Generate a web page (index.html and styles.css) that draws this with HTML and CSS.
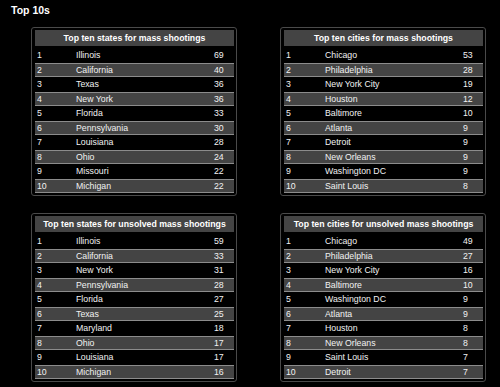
FILE: index.html
```html
<!DOCTYPE html>
<html>
<head>
<meta charset="utf-8">
<link rel="stylesheet" href="styles.css">
</head>
<body>
<div class="page">
  <h1 class="title">Top 10s</h1>
  <div class="grid">
    <div class="panel">
      <div class="head">Top ten states for mass shootings</div>
      <div class="row"><span>1</span><span>Illinois</span><span>69</span></div>
      <div class="row alt"><span>2</span><span>California</span><span>40</span></div>
      <div class="row"><span>3</span><span>Texas</span><span>36</span></div>
      <div class="row alt"><span>4</span><span>New York</span><span>36</span></div>
      <div class="row"><span>5</span><span>Florida</span><span>33</span></div>
      <div class="row alt"><span>6</span><span>Pennsylvania</span><span>30</span></div>
      <div class="row"><span>7</span><span>Louisiana</span><span>28</span></div>
      <div class="row alt"><span>8</span><span>Ohio</span><span>24</span></div>
      <div class="row"><span>9</span><span>Missouri</span><span>22</span></div>
      <div class="row alt"><span>10</span><span>Michigan</span><span>22</span></div>
    </div>
    <div class="panel">
      <div class="head">Top ten cities for mass shootings</div>
      <div class="row"><span>1</span><span>Chicago</span><span>53</span></div>
      <div class="row alt"><span>2</span><span>Philadelphia</span><span>28</span></div>
      <div class="row"><span>3</span><span>New York City</span><span>19</span></div>
      <div class="row alt"><span>4</span><span>Houston</span><span>12</span></div>
      <div class="row"><span>5</span><span>Baltimore</span><span>10</span></div>
      <div class="row alt"><span>6</span><span>Atlanta</span><span>9</span></div>
      <div class="row"><span>7</span><span>Detroit</span><span>9</span></div>
      <div class="row alt"><span>8</span><span>New Orleans</span><span>9</span></div>
      <div class="row"><span>9</span><span>Washington DC</span><span>9</span></div>
      <div class="row alt"><span>10</span><span>Saint Louis</span><span>8</span></div>
    </div>
    <div class="panel">
      <div class="head">Top ten states for unsolved mass shootings</div>
      <div class="row"><span>1</span><span>Illinois</span><span>59</span></div>
      <div class="row alt"><span>2</span><span>California</span><span>33</span></div>
      <div class="row"><span>3</span><span>New York</span><span>31</span></div>
      <div class="row alt"><span>4</span><span>Pennsylvania</span><span>28</span></div>
      <div class="row"><span>5</span><span>Florida</span><span>27</span></div>
      <div class="row alt"><span>6</span><span>Texas</span><span>25</span></div>
      <div class="row"><span>7</span><span>Maryland</span><span>18</span></div>
      <div class="row alt"><span>8</span><span>Ohio</span><span>17</span></div>
      <div class="row"><span>9</span><span>Louisiana</span><span>17</span></div>
      <div class="row alt"><span>10</span><span>Michigan</span><span>16</span></div>
    </div>
    <div class="panel">
      <div class="head">Top ten cities for unsolved mass shootings</div>
      <div class="row"><span>1</span><span>Chicago</span><span>49</span></div>
      <div class="row alt"><span>2</span><span>Philadelphia</span><span>27</span></div>
      <div class="row"><span>3</span><span>New York City</span><span>16</span></div>
      <div class="row alt"><span>4</span><span>Baltimore</span><span>10</span></div>
      <div class="row"><span>5</span><span>Washington DC</span><span>9</span></div>
      <div class="row alt"><span>6</span><span>Atlanta</span><span>9</span></div>
      <div class="row"><span>7</span><span>Houston</span><span>8</span></div>
      <div class="row alt"><span>8</span><span>New Orleans</span><span>8</span></div>
      <div class="row"><span>9</span><span>Saint Louis</span><span>7</span></div>
      <div class="row alt"><span>10</span><span>Detroit</span><span>7</span></div>
    </div>
  </div>
</div>
</body>
</html>
```

FILE: styles.css
```css
html, body {
  margin: 0;
  padding: 0;
  background: #000;
  color: #f2f2f2;
  font-family: "Liberation Sans", Arial, sans-serif;
}
.page {
  padding: 3px 11px 0 11px;
}
.title {
  margin: 0;
  font-size: 10.5px;
  line-height: 14px;
  font-weight: bold;
  color: #fff;
}
.grid {
  margin: 10px 0 0 20px;
  display: grid;
  grid-template-columns: 206px 206px;
  column-gap: 43px;
  row-gap: 17px;
}
.panel {
  border: 1px solid #4a4a4a;
  border-radius: 3px;
  padding: 2px 2px 2px 3px;
}
.head {
  height: 16px;
  line-height: 16px;
  background: #444;
  font-weight: bold;
  font-size: 8.75px;
  text-align: center;
  color: #fff;
  margin-bottom: 2px;
}
.row {
  display: grid;
  grid-template-columns: 39px 138px 1fr;
  height: 15px;
  line-height: 15px;
  padding: 0 0 0 2px;
  font-size: 8.75px;
}
.row.alt {
  background: #444;
  border-top: 1px solid #8c8c8c;
  border-bottom: 1px solid #8c8c8c;
  height: 12px;
  line-height: 12px;
}
```
